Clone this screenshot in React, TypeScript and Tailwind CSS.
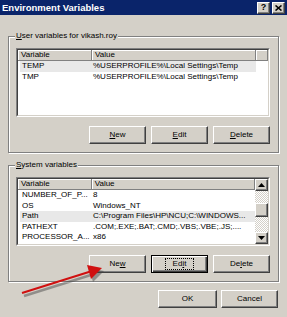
import type { ReactNode } from "react";

const raised =
  "border border-t-white border-l-white border-r-[#404040] border-b-[#404040] shadow-[inset_-1px_-1px_0_#808080]";

function Btn({ children, w, focused = false }: { children: ReactNode; w: string; focused?: boolean }) {
  if (focused) {
    return (
      <div
        className={`${w} h-[18px] flex items-center justify-center border border-black bg-[#D4D0C8] shadow-[inset_1px_1px_0_#fff,inset_-1px_-1px_0_#404040,inset_-2px_-2px_0_#808080]`}
      >
        <span className="px-[7px] h-[12px] flex items-center border border-dotted border-black leading-none">
          {children}
        </span>
      </div>
    );
  }
  return (
    <div className={`${w} h-[18px] flex items-center justify-center bg-[#D4D0C8] leading-none ${raised}`}>
      {children}
    </div>
  );
}

function HeaderCell({ children, w }: { children?: ReactNode; w: string }) {
  return (
    <div
      className={`${w} h-full flex items-center pl-[3px] bg-[#D4D0C8] border-r border-b border-r-[#808080] border-b-[#808080] shadow-[inset_1px_1px_0_#fff]`}
    >
      {children}
    </div>
  );
}

type Row = { name: string; value: string; selected?: boolean };

function VarList({ rows, scroll = false }: { rows: Row[]; scroll?: boolean }) {
  return (
    <div className="h-[69px] w-[254px] border border-t-[#808080] border-l-[#808080] border-r-white border-b-white">
      <div className="h-full w-full border border-t-[#404040] border-l-[#404040] border-r-[#D4D0C8] border-b-[#D4D0C8] bg-white flex overflow-hidden">
        <div className="flex-1 flex flex-col min-w-0">
          <div className="h-[11px] flex shrink-0">
            <HeaderCell w="w-[74px]">Variable</HeaderCell>
            <HeaderCell w="w-[164px]">Value</HeaderCell>
            {!scroll && <HeaderCell w="flex-1" />}
          </div>
          {rows.map((r) => (
            <div key={r.name} className="h-[10.5px] flex shrink-0 items-center">
              <div
                className={`h-full flex items-center ml-[2px] w-[236px] ${r.selected ? "bg-[#E8E8E8]" : ""}`}
              >
                <span className="w-[73px] pl-[2px] whitespace-nowrap">{r.name}</span>
                <span className="flex-1 whitespace-nowrap">{r.value}</span>
              </div>
            </div>
          ))}
        </div>
        {scroll && (
          <div className="w-[13px] flex flex-col shrink-0 [background:repeating-conic-gradient(#fff_0%_25%,#D4D0C8_0%_50%)_0_0/2px_2px]">
            <div className={`h-[12px] flex items-center justify-center bg-[#D4D0C8] ${raised}`}>
              <svg width="7" height="4" viewBox="0 0 7 4">
                <path d="M3.5 0 L7 4 L0 4 Z" fill="#000" />
              </svg>
            </div>
            <div className="h-[12px]" />
            <div className={`h-[14px] bg-[#D4D0C8] ${raised}`} />
            <div className="flex-1" />
            <div className={`h-[12px] flex items-center justify-center bg-[#D4D0C8] ${raised}`}>
              <svg width="7" height="4" viewBox="0 0 7 4">
                <path d="M0 0 L7 0 L3.5 4 Z" fill="#000" />
              </svg>
            </div>
          </div>
        )}
      </div>
    </div>
  );
}

function Group({ label, children }: { label: ReactNode; children: ReactNode }) {
  return (
    <div className="relative ml-[8px] w-[271px] h-[117px] border border-[#808080] shadow-[inset_1px_1px_0_#fff,1px_1px_0_#fff] pt-[11px] px-[7px]">
      <span className="absolute left-[6px] top-[-6px] bg-[#D4D0C8] px-[1px] leading-[10px]">{label}</span>
      {children}
    </div>
  );
}

export default function App() {
  return (
    <div
      className="relative w-[287px] h-[317px] bg-[#D4D0C8] overflow-hidden text-[8px] text-black flex flex-col"
      style={{ fontFamily: '"Liberation Sans", Arial, sans-serif' }}
    >
      {/* title bar */}
      <div className="h-[15px] bg-[#0A246A] flex items-center pl-[2px] pr-[2px] shrink-0">
        <span className="flex-1 text-white font-bold text-[9.5px] leading-none">Environment Variables</span>
        <div className={`w-[13px] h-[12px] flex items-center justify-center bg-[#D4D0C8] font-bold text-[9px] leading-none ${raised}`}>
          ?
        </div>
        <div className={`ml-[2px] w-[13px] h-[12px] flex items-center justify-center bg-[#D4D0C8] ${raised}`}>
          <svg width="7" height="6" viewBox="0 0 7 6">
            <path d="M0.5 0.5 L6.5 5.5 M6.5 0.5 L0.5 5.5" stroke="#000" strokeWidth="1.6" />
          </svg>
        </div>
      </div>

      <div className="mt-[21px]">
        <Group
          label={
            <>
              <u>U</u>ser variables for vikash.roy
            </>
          }
        >
          <VarList
            rows={[
              { name: "TEMP", value: "%USERPROFILE%\\Local Settings\\Temp", selected: true },
              { name: "TMP", value: "%USERPROFILE%\\Local Settings\\Temp" },
            ]}
          />
          <div className="mt-[9px] flex justify-end gap-[5px] pr-[1px]">
            <Btn w="w-[57px]">
              <u>N</u>ew
            </Btn>
            <Btn w="w-[57px]">
              <u>E</u>dit
            </Btn>
            <Btn w="w-[57px]">
              <u>D</u>elete
            </Btn>
          </div>
        </Group>
      </div>

      <div className="mt-[12px]">
        <Group
          label={
            <>
              <u>S</u>ystem variables
            </>
          }
        >
          <VarList
            scroll
            rows={[
              { name: "NUMBER_OF_P...", value: "8" },
              { name: "OS", value: "Windows_NT" },
              { name: "Path", value: "C:\\Program Files\\HP\\NCU;C:\\WINDOWS...", selected: true },
              { name: "PATHEXT", value: ".COM;.EXE;.BAT;.CMD;.VBS;.VBE;.JS;...." },
              { name: "PROCESSOR_A...", value: "x86" },
            ]}
          />
          <div className="mt-[9px] flex justify-end gap-[5px] pr-[1px]">
            <Btn w="w-[57px]">
              Ne<u>w</u>
            </Btn>
            <Btn w="w-[57px]" focused>
              Ed<u>i</u>t
            </Btn>
            <Btn w="w-[57px]">
              De<u>l</u>ete
            </Btn>
          </div>
        </Group>
      </div>

      <div className="mt-[8px] flex justify-end gap-[4px] pr-[9px]">
        <Btn w="w-[59px]">OK</Btn>
        <Btn w="w-[57px]">Cancel</Btn>
      </div>

      {/* red arrow pointing at New */}
      <svg className="absolute left-0 top-[255px]" width="110" height="45" viewBox="0 0 110 45">
        <g transform="translate(2,3)" opacity="0.45">
          <line x1="22" y1="38" x2="92" y2="16" stroke="#404040" strokeWidth="2.5" />
          <path d="M102 13 L87 10 L91 24 Z" fill="#404040" />
        </g>
        <line x1="22" y1="38" x2="92" y2="16" stroke="#D01010" strokeWidth="2" />
        <path d="M102 13 L87 10 L91 24 Z" fill="#D01010" />
      </svg>
    </div>
  );
}
